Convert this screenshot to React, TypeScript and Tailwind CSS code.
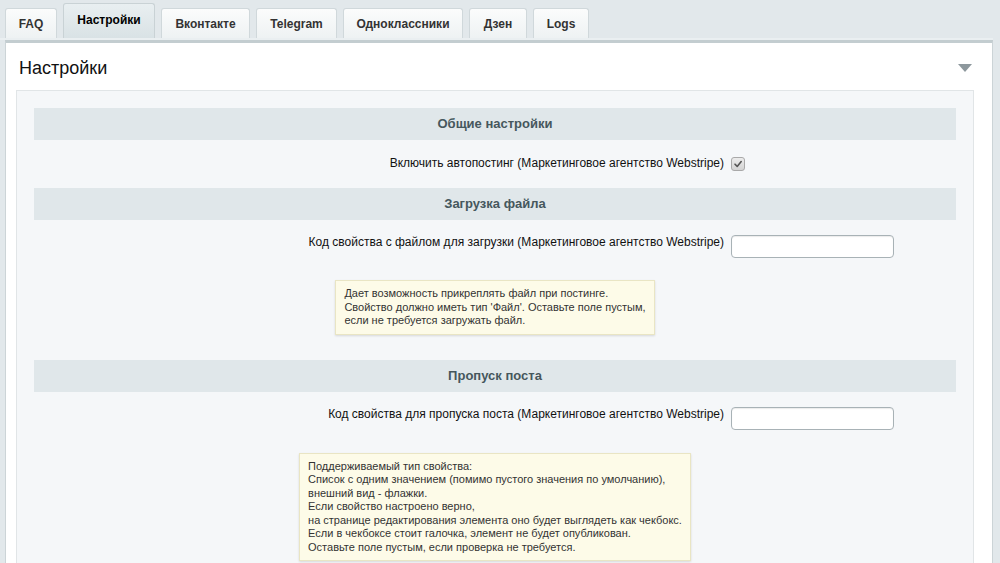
import React from 'react';

const tabs = [
  { label: 'FAQ', width: 'w-[52px]', active: false },
  { label: 'Настройки', width: 'w-[92px]', active: true },
  { label: 'Вконтакте', width: 'w-[89px]', active: false },
  { label: 'Telegram', width: 'w-[81px]', active: false },
  { label: 'Одноклассники', width: 'w-[120px]', active: false },
  { label: 'Дзен', width: 'w-[58px]', active: false },
  { label: 'Logs', width: 'w-[56px]', active: false },
];

const SectionHeader: React.FC<{ title: string }> = ({ title }) => (
  <div className="h-[32px] bg-[#e0e7ea] flex items-center justify-center text-[13px] font-bold text-[#46575d]">
    {title}
  </div>
);

const Note: React.FC<{ lines: string[] }> = ({ lines }) => (
  <div className="flex justify-center">
    <div className="bg-[#fdfbe8] border border-[#e9e5c4] shadow-[0_1px_2px_rgba(0,0,0,0.12)] px-[8px] py-[6px] text-[11px] leading-[13.5px] text-[#333]">
      {lines.map((l, i) => (
        <div key={i} className="whitespace-nowrap">{l}</div>
      ))}
    </div>
  </div>
);

const TextRow: React.FC<{ label: string }> = ({ label }) => (
  <div className="flex items-start pt-[15px]">
    <div className="w-[690px] text-right text-[12px] leading-[15px] text-[#111]">{label}</div>
    <input
      type="text"
      className="ml-[7px] w-[163px] h-[23px] bg-white border border-[#a8b2b6] rounded-[4px] shadow-[inset_0_1px_1px_rgba(0,0,0,0.08)] outline-none"
    />
  </div>
);

export default function App() {
  return (
    <div
      className="w-[1000px] h-[563px] overflow-hidden bg-[#e2e8eb] flex flex-col"
      style={{ fontFamily: '"Liberation Sans", Arial, sans-serif' }}
    >
      {/* tabs */}
      <div className="h-[38px] flex items-end gap-[6px] pl-[5px] shrink-0">
        {tabs.map((t) =>
          t.active ? (
            <div
              key={t.label}
              className={`${t.width} h-[35px] flex items-center justify-center pb-[3px] rounded-t-[3px] border border-b-0 border-[#c9d2d5] bg-gradient-to-b from-[#e9eff1] to-[#d9e2e5] text-[12px] font-bold text-black`}
            >
              {t.label}
            </div>
          ) : (
            <div
              key={t.label}
              className={`${t.width} h-[30px] flex items-center justify-center rounded-t-[3px] border border-b-0 border-[#d0d8db] bg-gradient-to-b from-[#fbfcfc] to-[#eef2f3] text-[12px] font-bold text-[#333]`}
            >
              {t.label}
            </div>
          )
        )}
      </div>
      <div className="h-[2px] bg-[#eaeff1] mr-[7px] shrink-0" />

      {/* panel */}
      <div className="flex-1 flex flex-col bg-white border-t-[3px] border-t-[#c3cdd0] border-x border-x-[#ccd4d7] ml-[5px] mr-[7px]">
        <div className="h-[47px] flex items-center justify-between pl-[13px] pr-[20px] pt-[3px] shrink-0">
          <div className="text-[18px] text-[#111]">Настройки</div>
          <svg width="14" height="8" viewBox="0 0 14 8">
            <polygon points="0,0 14,0 7,8" fill="#8d989d" />
          </svg>
        </div>

        <div className="flex-1 ml-[10px] mr-[18px] border border-[#e1e5e7] bg-[#f5f7f9] px-[17px] pt-[17px]">
          <SectionHeader title="Общие настройки" />
          <div className="flex items-center pt-[16px] pb-[17px]">
            <div className="w-[690px] text-right text-[12px] leading-[15px] text-[#111]">
              Включить автопостинг (Маркетинговое агентство Webstripe)
            </div>
            <div className="ml-[7px] w-[14px] h-[14px] rounded-[3px] border border-[#a9a9a9] bg-gradient-to-b from-[#ececec] to-[#d3d3d3] flex items-center justify-center">
              <svg width="10" height="10" viewBox="0 0 10 10">
                <path d="M2 5.2 L4.2 7.4 L8.2 2.6" fill="none" stroke="#555" strokeWidth="1.6" strokeLinecap="round" strokeLinejoin="round" />
              </svg>
            </div>
          </div>

          <SectionHeader title="Загрузка файла" />
          <TextRow label="Код свойства с файлом для загрузки (Маркетинговое агентство Webstripe)" />
          <div className="pt-[22px] pb-[25px]">
            <Note
              lines={[
                'Дает возможность прикреплять файл при постинге.',
                "Свойство должно иметь тип 'Файл'. Оставьте поле пустым,",
                'если не требуется загружать файл.',
              ]}
            />
          </div>

          <SectionHeader title="Пропуск поста" />
          <TextRow label="Код свойства для пропуска поста (Маркетинговое агентство Webstripe)" />
          <div className="pt-[23px] pb-[27px]">
            <Note
              lines={[
                'Поддерживаемый тип свойства:',
                'Список с одним значением (помимо пустого значения по умолчанию),',
                'внешний вид - флажки.',
                'Если свойство настроено верно,',
                'на странице редактирования элемента оно будет выглядеть как чекбокс.',
                'Если в чекбоксе стоит галочка, элемент не будет опубликован.',
                'Оставьте поле пустым, если проверка не требуется.',
              ]}
            />
          </div>
        </div>
      </div>
    </div>
  );
}
